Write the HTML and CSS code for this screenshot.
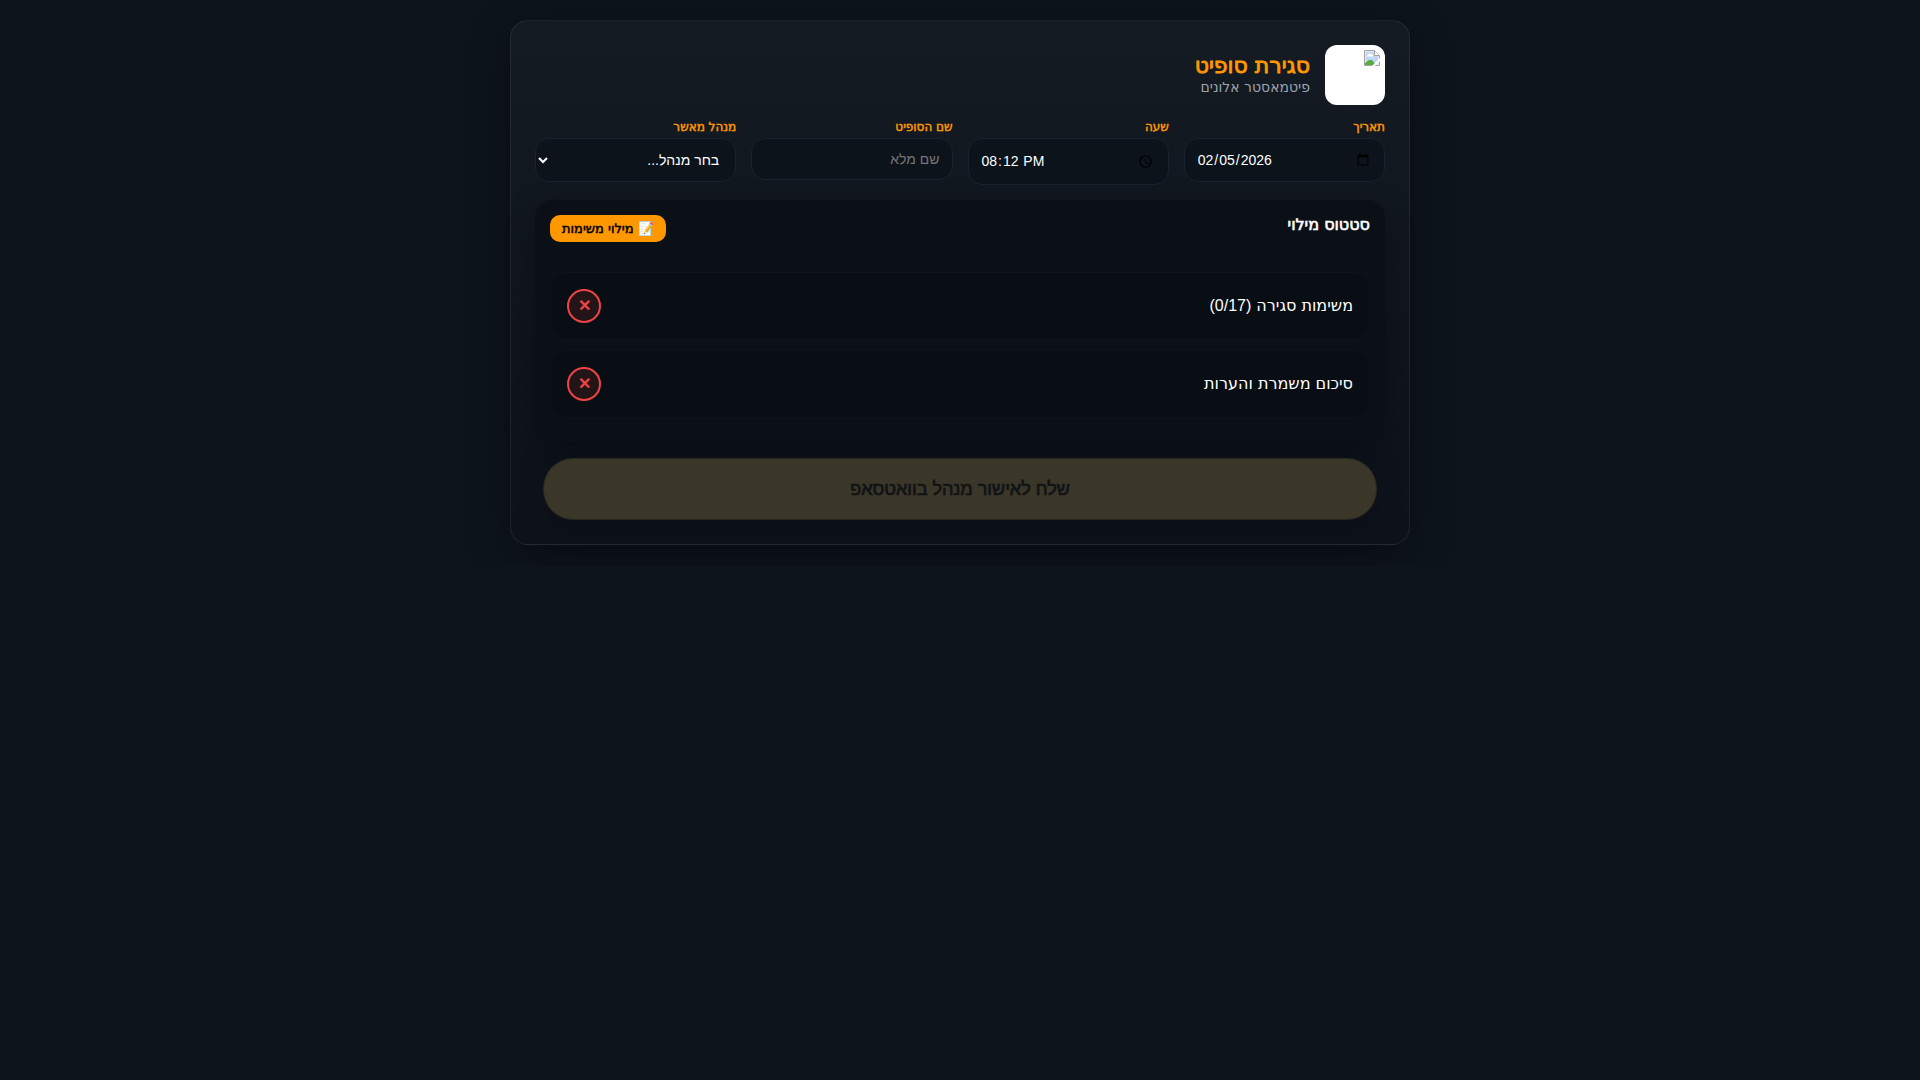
FILE: index.html
```html
<!DOCTYPE html>
<html lang="he" dir="rtl">
<head>
<meta charset="utf-8">
<meta name="viewport" content="width=device-width, initial-scale=1">
<title>סגירת סופיט</title>
<link rel="stylesheet" href="styles.css">
</head>
<body>
<main class="card">
  <header class="header">
    <div class="logo">
      <svg width="16" height="16" viewBox="0 0 16 16" aria-hidden="true">
        <path d="M0.5 0.5H10.5L15.5 5.5V15.5H0.5Z" fill="#fff" stroke="#a3a3a3"/>
        <path d="M1.5 1.5H10V6H14.5V14.5H1.5Z" fill="#c3d5f5"/>
        <path d="M3 6.5a1.5 1.5 0 0 1 1-2 2 2 0 0 1 3.500 0 1 1 0 0 1 1 2Z" fill="#fff"/>
        <path d="M1 15v-2l4-3 3 0 4 5Z" fill="#58ab3c"/>
        <path d="M8 16L16 8V11L11 16Z" fill="#fff"/>
        <path d="M10.500 0.500V5.500H15.500" fill="#f4f4f4" stroke="#a3a3a3"/>
      </svg>
    </div>
    <div>
      <h1 class="title strong">סגירת סופיט</h1>
      <p class="subtitle">פיטמאסטר אלונים</p>
    </div>
  </header>
  <form class="fields">
    <div class="field">
      <label class="strong" for="date">תאריך</label>
      <input id="date" class="control" type="date" dir="ltr" value="2026-02-05">
    </div>
    <div class="field">
      <label class="strong" for="time">שעה</label>
      <input id="time" class="control" type="time" dir="ltr" value="20:12">
    </div>
    <div class="field">
      <label class="strong" for="name">שם הסופיט</label>
      <input id="name" class="control" type="text" placeholder="שם מלא">
    </div>
    <div class="field">
      <label class="strong" for="manager">מנהל מאשר</label>
      <select id="manager" class="control"><option>בחר מנהל...</option></select>
    </div>
  </form>
  <section class="panel">
    <div class="panel-head">
      <h2 class="panel-title strong">סטטוס מילוי</h2>
      <button class="fill-button strong" type="button">📝 מילוי משימות</button>
    </div>
    <ul class="list">
      <li class="item"><span>משימות סגירה <span class="count">(0/17)</span></span><span class="status">✕</span></li>
      <li class="item"><span>סיכום משמרת והערות</span><span class="status">✕</span></li>
    </ul>
  </section>
  <button class="send strong" type="button" disabled>שלח לאישור מנהל בוואטסאפ</button>
</main>
</body>
</html>
```
FILE: styles.css
```css
* { box-sizing: border-box; }
body {
  margin: 0;
  padding: 20px;
  background: #0d141b;
  color: #fff;
  font-family: "DejaVu Sans", sans-serif;
  font-size: 16px;
  line-height: 18px;
}
h1, h2, p, ul { margin: 0; padding: 0; }
/* Emphasis that keeps the widths of the regular Hebrew face */
.strong {
  font-weight: normal;
  -webkit-text-stroke: 0.04em currentColor;
}
.card {
  max-width: 900px;
  margin: 0 auto;
  padding: 24px;
  border: 1px solid rgba(255, 255, 255, 0.07);
  border-radius: 18px;
  background: linear-gradient(180deg, #141b22, #0d111a);
  box-shadow: 0 10px 40px rgba(0, 0, 0, 0.35);
}
.header {
  display: flex;
  align-items: center;
  gap: 15px;
  margin-bottom: 15px;
}
.logo {
  width: 60px;
  height: 60px;
  padding: 5px;
  border-radius: 12px;
  background: #fff;
}
.logo svg { display: block; }
.title {
  color: #ff9800;
  font-size: 22px;
  line-height: 24px;
}
.subtitle {
  color: #9ca3af;
  font-size: 14px;
  line-height: 18px;
}
.fields {
  display: grid;
  grid-template-columns: repeat(4, minmax(0, 1fr));
  align-items: start;
  gap: 15px;
}
.field label {
  display: block;
  margin-bottom: 4px;
  color: #ff9800;
  font-size: 12px;
  line-height: 14px;
}
.control {
  display: block;
  width: 100%;
  padding: 12px;
  border: 1px solid #1a222d;
  border-radius: 14px;
  background: #0c131a;
  color: #fff;
  font-family: "Liberation Sans", Arial, sans-serif;
  font-size: 14px;
}
.panel {
  margin-top: 15px;
  padding: 15px;
  border-radius: 18px;
  background: #0b1017;
  box-shadow: 0 10px 30px rgba(0, 0, 0, 0.3);
}
.panel-head {
  display: flex;
  justify-content: space-between;
  align-items: flex-start;
}
.panel-title {
  font-size: 16px;
  line-height: 20px;
}
.fill-button {
  padding: 6px 12px;
  border: 0;
  border-radius: 10px;
  background: #ff9800;
  color: #000;
  font-family: inherit;
  font-size: 13px;
  line-height: 15px;
}
.list {
  display: flex;
  flex-direction: column;
  gap: 10px;
  padding: 30px 0 9px;
  list-style: none;
}
.item {
  display: flex;
  justify-content: space-between;
  align-items: center;
  padding: 16px;
  border: 1px solid #0d131a;
  border-radius: 16px;
  background: #090e15;
}
.count { font-family: "Liberation Sans", Arial, sans-serif; }
.status {
  display: flex;
  align-items: center;
  justify-content: center;
  width: 34px;
  height: 34px;
  border: 2px solid #ef4444;
  border-radius: 50%;
  background: #231418;
  color: #ef4444;
  font-family: "Liberation Sans", Arial, sans-serif;
  font-weight: bold;
}
.send {
  display: block;
  width: calc(100% - 16px);
  margin: 16px auto 0;
  padding: 20px;
  border: 1px solid #26251f;
  border-radius: 30px;
  background: #3a3628;
  color: #101316;
  font-family: "Liberation Sans", Arial, sans-serif;
  font-size: 18px;
  line-height: 20px;
  box-shadow: 0 10px 30px rgba(0, 0, 0, 0.15);
}
@media (max-width: 700px) {
  .fields { grid-template-columns: repeat(2, minmax(0, 1fr)); }
}
```
